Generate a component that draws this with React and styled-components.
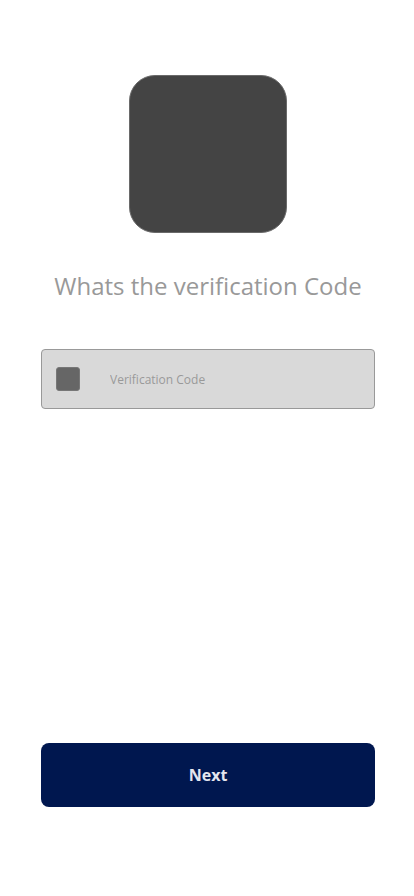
import React from "react";
import styled, { createGlobalStyle } from "styled-components";

const GlobalStyle = createGlobalStyle`
  html, body {
    margin: 0;
    padding: 0;
    background: #ffffff;
    font-family: "Open Sans", "Noto Sans", sans-serif;
  }
`;

const Screen = styled.main`
  width: 414px;
  height: 896px;
  box-sizing: border-box;
  display: flex;
  flex-direction: column;
  align-items: center;
  padding: 75px 39px 89px 41px;
`;

const Logo = styled.div`
  width: 158px;
  height: 158px;
  box-sizing: border-box;
  border-radius: 26px;
  background: #444444;
  border: 1px solid #6a6a6a;
`;

const Title = styled.h1`
  margin: 36px 0 0;
  font-size: 24px;
  font-weight: 400;
  line-height: 33px;
  color: #999999;
  text-align: center;
`;

const Field = styled.label`
  margin-top: 47px;
  width: 334px;
  height: 60px;
  box-sizing: border-box;
  display: flex;
  align-items: center;
  padding-left: 14px;
  gap: 30px;
  background: #d9d9d9;
  border: 1px solid #999999;
  border-radius: 4px;
`;

const FieldIcon = styled.span`
  width: 24px;
  height: 24px;
  box-sizing: border-box;
  border-radius: 3px;
  background: #666666;
  border: 1px solid #777777;
`;

const FieldInput = styled.input`
  flex: 1;
  border: none;
  outline: none;
  background: transparent;
  font-family: inherit;
  font-size: 12px;
  color: #555555;
  padding: 0;

  &::placeholder {
    color: #999999;
  }
`;

const Spacer = styled.div`
  flex: 1;
`;

const NextButton = styled.button`
  width: 334px;
  height: 64px;
  border: none;
  border-radius: 8px;
  background: #00174f;
  color: #e4e6ee;
  font-family: inherit;
  font-size: 16px;
  font-weight: 700;
  cursor: pointer;
`;

export default function App() {
  return (
    <>
      <GlobalStyle />
      <Screen>
        <Logo />
        <Title>Whats the verification Code</Title>
        <Field>
          <FieldIcon />
          <FieldInput placeholder="Verification Code" />
        </Field>
        <Spacer />
        <NextButton>Next</NextButton>
      </Screen>
    </>
  );
}
